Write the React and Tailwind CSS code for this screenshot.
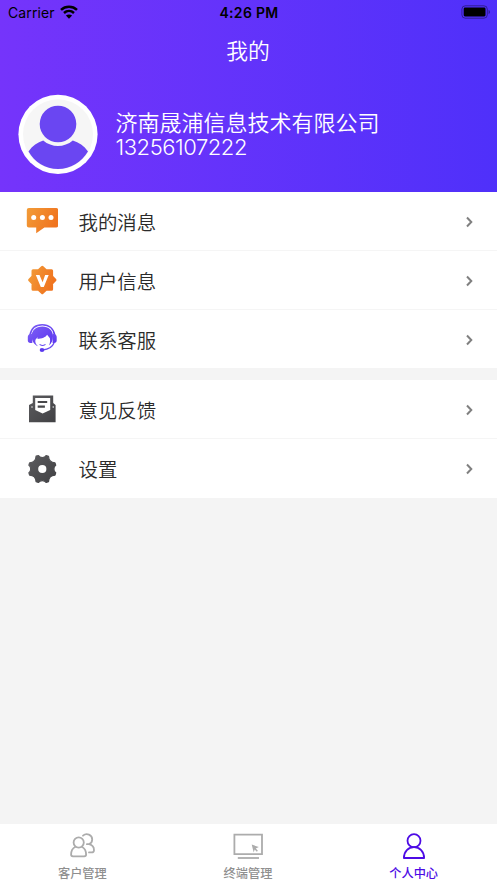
import React from "react";

const uiFont = "font-['Inter','Noto_Sans_CJK_SC',sans-serif]";
const cjkFont = "font-['Noto_Sans_CJK_SC',sans-serif]";

function Gradients() {
  return (
    <svg className="absolute h-0 w-0" aria-hidden="true">
      <defs>
        <linearGradient id="orange" x1="0" y1="0" x2="1" y2="0.4">
          <stop offset="0" stopColor="#f29c38" />
          <stop offset="1" stopColor="#f0741f" />
        </linearGradient>
        <linearGradient id="violet" x1="0" y1="0" x2="1" y2="1">
          <stop offset="0" stopColor="#7b5cf5" />
          <stop offset="1" stopColor="#5a35ee" />
        </linearGradient>
        <linearGradient id="slate" x1="0" y1="0" x2="1" y2="1">
          <stop offset="0" stopColor="#5b5b5e" />
          <stop offset="1" stopColor="#414144" />
        </linearGradient>
      </defs>
    </svg>
  );
}

function MessageIcon() {
  return (
    <svg viewBox="0 0 32 32" className="h-8 w-8">
      <path fill="url(#orange)" d="M2.8 3h27.4a2 2 0 0 1 2 2v15.4a2 2 0 0 1-2 2H18.4L10.2 28.3V22.4H2.8a2 2 0 0 1-2-2V5a2 2 0 0 1 2-2Z" />
      <circle cx="7.7" cy="12.5" r="2.5" fill="#fff" />
      <circle cx="16.4" cy="12.5" r="2.5" fill="#fff" />
      <circle cx="25" cy="12.5" r="2.5" fill="#fff" />
    </svg>
  );
}

function BadgeIcon() {
  return (
    <svg viewBox="0 0 32 32" className="h-8 w-8">
      <path
        fill="url(#orange)"
        stroke="url(#orange)"
        strokeWidth="3"
        strokeLinejoin="round"
        d="M16.3 3.3 19.8 6.7H25.6V12.5L29 16 25.6 19.5V25.3H19.8L16.3 28.7 12.8 25.3H7V19.5L3.6 16 7 12.5V6.7H12.8Z"
      />
      <path fill="#fff" d="M9.8 11h3.7l3.1 7.2 2.5-7.2h3.6l-4.9 12h-3Z" />
    </svg>
  );
}

function SupportIcon() {
  return (
    <svg viewBox="0 0 32 32" className="h-8 w-8">
      <path d="M4 12.5C5 5.6 9.6 1.8 16.3 1.8S27.8 5.6 28.7 12.5" fill="none" stroke="url(#violet)" strokeWidth="1.6" />
      <path fill="url(#violet)" d="M16.3 3.5c6.3 0 10.7 4 10.7 9.5 0 4.4-1.4 7.3-4.1 9.6 1.2-2.6 1.5-4.6 1-7.4l-2.8-3.4c-1.2 2.4-5.3 4.1-9.8 4.2l.8-1.8c-2.1 1-3.2 2.8-2.7 5 .4 1.8 1.4 3.1 2.8 4.1C8.400 22 5.600 18.200 5.600 13c0-5.500 4.400-9.500 10.700-9.500Z" />
      <path fill="url(#violet)" d="M6.300 11v9.100H4.400c-1.600 0-2.600-1.100-2.600-2.500v-3.500c0-1.700 1-3.100 2.600-3.100ZM26.600 11h1.500c1.600 0 2.600 1.400 2.600 3.100v3.500c0 1.400-1 2.500-2.600 2.500h-1.500Z" />
      <path d="M28 20c-1.700 4.200-5.600 6.400-11.300 7" fill="none" stroke="#6849f2" strokeWidth="1.3" />
      <path d="M14 21.600c1.500 1.100 3.600 1.100 5.100 0" fill="none" stroke="#6849f2" strokeWidth="1.1" strokeLinecap="round" />
      <ellipse cx="16" cy="27" rx="2.300" ry="1.900" fill="#5b39ef" />
    </svg>
  );
}

function FeedbackIcon() {
  return (
    <svg viewBox="0 0 32 32" className="h-8 w-8">
      <path fill="url(#slate)" d="M6.8 2.500h20.400v7.600l2.400 1.900V29.300H3V12l3.800-2.100Z" />
      <path fill="#fff" d="M9.2 5h15v11.900L16.600 20.500l-7.400-3.600Z" />
      <path d="M11.700 9h9.500M11.700 13.700h7.200" stroke="#48484b" strokeWidth="2.2" />
      <circle cx="6" cy="14" r=".7" fill="#fff" />
      <circle cx="27.200" cy="14" r=".7" fill="#fff" />
    </svg>
  );
}

function GearIcon() {
  return (
    <svg viewBox="0 0 32 32" className="h-8 w-8">
      <path
        fill="url(#slate)"
        stroke="url(#slate)"
        strokeWidth="1.2"
        strokeLinejoin="round"
        d="M10.1 3 12.5 2.600C13.800 5.100 18.800 5.100 20.100 2.600L22.500 3.300C22.700 7.400 24.900 9.600 29 9.800L29.700 12.200C27.300 13.700 27.300 18.300 29.700 19.800L29 22.200C24.900 22.400 22.700 24.600 22.500 28.700L20.100 29.400C18.800 26.900 13.800 26.900 12.500 29.400L10.100 28.700C9.900 24.600 7.700 22.400 3.600 22.200L2.900 19.800C5.300 18.300 5.300 13.700 2.900 12.200L3.600 9.800C7.700 9.600 9.900 7.400 10.100 3Z"
      />
      <circle cx="16.3" cy="16" r="4.1" fill="#fff" />
    </svg>
  );
}

function CustomersIcon() {
  return (
    <svg viewBox="0 0 28 28" className="h-7 w-7" fill="none" stroke="#acacac" strokeWidth="1.800" strokeLinecap="round">
      <circle cx="10.700" cy="10.5" r="5.1" />
      <path d="M7.100 15C4.400 16.400 3.100 19 3.100 22.600c0 1.200.7 1.700 1.800 1.700h11.400c1.200 0 1.800-.5 1.800-1.700 0-3.600-1.300-6.200-4-7.600" />
      <path d="M15 3.700C18.600.5 24.200 2.900 24.200 7.500c0 2.200-1.200 3.900-3.100 4.700h-2.200M21.100 12.200c3.400.8 4.900 3.400 4.900 6 0 1.500-.9 2.200-2.400 2.200h-2.600" />
    </svg>
  );
}

function TerminalIcon() {
  return (
    <svg viewBox="0 0 32 28" className="h-7 w-8">
      <path d="M2.400 2.700h27.600v19.400H2.400Z" fill="none" stroke="#acacac" strokeWidth="1.800" />
      <path d="M5.800 26h21.200" stroke="#acacac" strokeWidth="1.800" />
      <path d="m19.700 12.600 7.100 2.500-3 1.300 2.100 2.300-1.100 1-2.100-2.300-1 3Z" fill="#acacac" />
    </svg>
  );
}

function ProfileIcon() {
  return (
    <svg viewBox="0 0 28 28" className="h-7 w-7" fill="none" stroke="#4d0be5" strokeWidth="1.800">
      <circle cx="14" cy="8.700" r="6.500" />
      <path d="M3.900 26c0-6.700 4.500-10.800 10.100-10.800s10.100 4.100 10.100 10.800Z" strokeLinejoin="round" />
    </svg>
  );
}

function MenuRow({ icon: Icon, label, last }) {
  return (
    <div className={"flex h-[58.8px] items-center bg-white pt-[2px] pr-[22px] pl-[26px] " + (last ? "" : "border-b border-[#f5f5f5]")}>
      <div className="-mt-[1px]">
        <Icon />
      </div>
      <span className={cjkFont + " ml-[20.5px] flex-1 text-[19.4px] leading-7 font-[350] text-[#2b2b2b]"}>{label}</span>
      <svg viewBox="0 0 12 12" className="h-3 w-3" fill="none" stroke="#808080" strokeWidth="2">
        <path d="m4 1.5 4.300 4.500L4 10.500" />
      </svg>
    </div>
  );
}

function Tab({ icon: Icon, label, active }) {
  return (
    <div className={"flex flex-col items-center pt-2 pr-[1px] " + (active ? "text-[#4d0be5]" : "text-[#8f8f8f]")}>
      <Icon />
      <span className={cjkFont + " mt-[5px] text-[12.2px] leading-4 font-medium"}>{label}</span>
    </div>
  );
}

function StatusBar() {
  return (
    <div className="grid h-[26px] grid-cols-3 items-center pr-[7px] pl-[8px] text-black">
      <div className="flex items-center gap-[5px]">
        <span className="text-[14px] leading-4 tracking-[0.1px]">Carrier</span>
        <svg viewBox="0 0 18 14" className="-mt-[2px] h-[14px] w-[18px]">
          <path d="M1 4.900C5.500.7 12.500.7 17 4.900M4 8c2.900-2.600 7.100-2.600 10 0" fill="none" stroke="#000" strokeWidth="2.500" />
          <path d="M5.900 10.500c1.800-1.500 4.400-1.500 6.200 0L9 13.800Z" fill="#000" />
        </svg>
      </div>
      <span className="text-center text-[14px] leading-4 font-semibold tracking-[0.3px]">4:26 PM</span>
      <svg viewBox="0 0 30 14" className="-mt-[2px] h-[14px] w-[30px] justify-self-end">
        <rect x="1.900" y=".8" width="25.400" height="12.400" rx="3.400" fill="none" stroke="#000" strokeOpacity=".4" />
        <rect x="3.700" y="2.600" width="21.800" height="8.800" rx="1.300" fill="#000" />
        <path d="M28.600 4.900c1.700.5 1.700 3.700 0 4.200Z" fill="#000" fillOpacity=".45" />
      </svg>
    </div>
  );
}

function Avatar() {
  return (
    <svg viewBox="0 0 80 80" className="h-20 w-20 shrink-0">
      <circle cx="40" cy="40.300" r="39.600" fill="#fff" />
      <circle cx="40" cy="40.300" r="35" fill="#f6f6f6" />
      <circle cx="40" cy="30" r="18.300" fill="#6a46f2" />
      <path d="M25.200 46.600c8.500 7.300 21.100 7.300 29.600 0 6 1.700 11.200 5.300 15.200 10.800C63.600 67.900 52.600 74.900 40 74.900S16.400 67.900 10.500 57.400C14.400 51.900 19.500 48.300 25.200 46.600Z" fill="#6a46f2" />
    </svg>
  );
}

export default function App() {
  return (
    <div className={uiFont + " flex h-[883px] w-full flex-col overflow-hidden bg-[#f4f4f4]"}>
      <Gradients />
      <header className="h-48 bg-linear-to-r from-[#7534fb] to-[#4f30fa]">
        <StatusBar />
        <h1 className={cjkFont + " flex h-[48px] items-center justify-center pr-[1px] text-[21.8px] font-[350] text-white"}>我的</h1>
        <div className="mt-[20px] flex items-center pl-[18px]">
          <Avatar />
          <div className="ml-[17.5px] pt-[1px] text-white">
            <div className={cjkFont + " text-[22px] leading-[25px] font-[350]"}>济南晟浦信息技术有限公司</div>
            <div className="text-[22px] leading-[27px] font-[350] tracking-[-0.45px]">13256107222</div>
          </div>
        </div>
      </header>
      <main className="flex-1">
        <MenuRow icon={MessageIcon} label="我的消息" />
        <MenuRow icon={BadgeIcon} label="用户信息" />
        <MenuRow icon={SupportIcon} label="联系客服" last />
        <div className="h-[11.7px]" />
        <MenuRow icon={FeedbackIcon} label="意见反馈" />
        <MenuRow icon={GearIcon} label="设置" last />
      </main>
      <nav className="grid h-[59px] grid-cols-3 bg-white">
        <Tab icon={CustomersIcon} label="客户管理" />
        <Tab icon={TerminalIcon} label="终端管理" />
        <Tab icon={ProfileIcon} label="个人中心" active />
      </nav>
    </div>
  );
}
